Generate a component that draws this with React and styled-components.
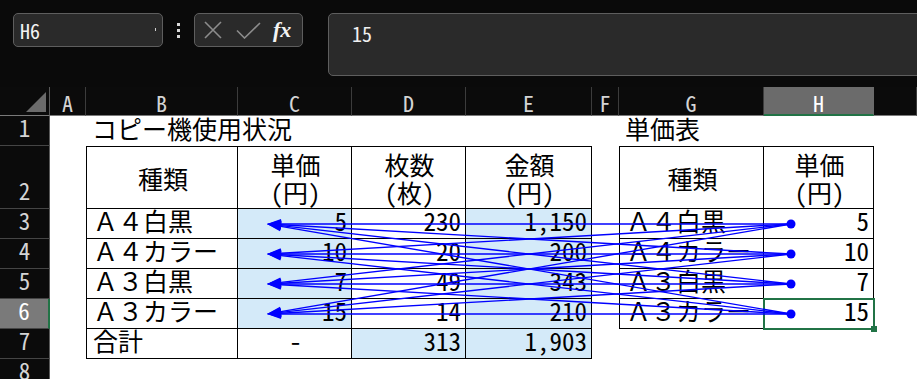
import React from "react";
import styled, { createGlobalStyle } from "styled-components";

const MONO = `"Noto Sans Mono CJK JP", "Noto Sans CJK JP", "DejaVu Sans Mono", monospace`;

const GlobalStyle = createGlobalStyle`
  html, body {
    margin: 0;
    padding: 0;
    background: #0a0a0a;
    overflow: hidden;
  }
  #root {
    width: 917px;
    height: 379px;
    overflow: hidden;
  }
`;

const Page = styled.div`
  display: flex;
  flex-direction: column;
  width: 917px;
  height: 379px;
  background: #0a0a0a;
  overflow: hidden;
`;

const FormulaBar = styled.div`
  display: flex;
  align-items: flex-start;
  height: 87px;
  flex-shrink: 0;
  box-sizing: border-box;
  padding: 13px 0 0 13px;
`;

const NameBox = styled.div`
  position: relative;
  width: 150px;
  height: 34px;
  box-sizing: border-box;
  display: flex;
  align-items: center;
  padding: 0 6px;
  border: 1px solid #5e5e5e;
  border-radius: 5px;
  background: #2a2a2a;
  color: #f2f2f2;
  font: 20px ${MONO};

  &::after {
    content: "";
    position: absolute;
    right: 6px;
    top: 14px;
    width: 1px;
    height: 3px;
    background: #cfcfcf;
  }
`;

const Grip = styled.div`
  width: 31px;
  height: 34px;
  display: flex;
  flex-direction: column;
  align-items: center;
  justify-content: center;
  gap: 3px;
`;

const GripDot = styled.span`
  width: 3px;
  height: 3px;
  background: #d9d9d9;
`;

const ActionBox = styled.div`
  width: 109px;
  height: 34px;
  box-sizing: border-box;
  display: flex;
  align-items: center;
  padding-left: 9px;
  gap: 14px;
  border: 1px solid #5e5e5e;
  border-radius: 5px;
  background: #2a2a2a;
`;

const Fx = styled.span`
  color: #f4f4f4;
  font: italic bold 22px "Liberation Serif", "DejaVu Serif", serif;
  margin-left: -2px;
`;

const FormulaInput = styled.div`
  flex: 1;
  height: 63px;
  margin-left: 25px;
  margin-right: -10px;
  box-sizing: border-box;
  padding: 5px 0 0 23px;
  border: 1px solid #5e5e5e;
  border-radius: 5px;
  background: #2a2a2a;
  color: #f0f0f0;
  font: 20px ${MONO};
`;

const Sheet = styled.div`
  position: relative;
  display: grid;
  grid-template-columns: 50px 36px 152px 114px 114px 126px 27px 145px 110px 1fr;
  grid-template-rows: 29px 30px 63px repeat(6, 30px);
  background: #ffffff;
  flex-shrink: 0;
`;

const Corner = styled.div`
  display: flex;
  align-items: flex-end;
  justify-content: flex-end;
  padding: 0 3px 3px 0;
  background: #0b0b0b;
  border-right: 1px solid #5a5a5a;
  border-bottom: 1px solid #7a7a7a;
`;

const CornerMark = styled.span`
  width: 0;
  height: 0;
  border-left: 20px solid transparent;
  border-bottom: 20px solid #6b6b6b;
`;

const ColHead = styled.div`
  display: flex;
  align-items: center;
  justify-content: center;
  padding-top: 2px;
  box-sizing: border-box;
  background: ${(p) => (p.$on ? "#6b6b6b" : "#0b0b0b")};
  color: ${(p) => (p.$on ? "#ffffff" : "#d4d4d4")};
  border-right: 1px solid ${(p) => (p.$on ? "#6b6b6b" : "#3c3c3c")};
  border-bottom: ${(p) => (p.$on ? "2px solid #217346" : "1px solid #7a7a7a")};
  font: 22px ${MONO};
`;

const RowHead = styled.div`
  display: flex;
  align-items: flex-end;
  justify-content: center;
  box-sizing: border-box;
  padding-bottom: 1px;
  line-height: 28px;
  background: ${(p) => (p.$on ? "#7a7a7a" : "#0b0b0b")};
  color: ${(p) => (p.$on ? "#ffffff" : "#d4d4d4")};
  border-right: ${(p) => (p.$on ? "2px solid #217346" : "1px solid #5a5a5a")};
  border-bottom: 1px solid #454545;
  font: 23px ${MONO};
`;

const Cell = styled.div`
  position: relative;
  display: flex;
  align-items: ${(p) => (p.$mid ? "center" : "flex-end")};
  justify-content: ${(p) =>
    p.$align === "right" ? "flex-end" : p.$align === "center" ? "center" : "flex-start"};
  box-sizing: border-box;
  min-width: 0;
  padding: 0 4px 0 6px;
  line-height: 28px;
  white-space: nowrap;
  color: #000000;
  font: 25px ${MONO};
  background: ${(p) => (p.$fill ? "#d4eaf9" : "transparent")};
  border-right: ${(p) => (p.$box ? "1px solid #000" : "none")};
  border-bottom: ${(p) => (p.$box ? "1px solid #000" : "none")};
  border-left: ${(p) => (p.$left ? "1px solid #000" : "none")};
  border-top: ${(p) => (p.$top ? "1px solid #000" : "none")};
  ${(p) =>
    p.$active &&
    `
    z-index: 1;
    outline: 2px solid #217346;
    outline-offset: -1px;
    &::after {
      content: "";
      position: absolute;
      right: -4px;
      bottom: -4px;
      width: 6px;
      height: 6px;
      background: #217346;
    }
  `}
`;

const TwoLine = styled.div`
  display: flex;
  flex-direction: column;
  align-items: center;
  line-height: 28px;
`;

const Overlay = styled.svg`
  position: absolute;
  left: 0;
  top: 0;
  width: 917px;
  height: 302px;
  pointer-events: none;
  z-index: 2;
`;

const COLS = ["A", "B", "C", "D", "E", "F", "G", "H", "I"];

const head = (lines, extra = {}) => ({ t: lines, a: "center", mid: true, box: true, top: true, ...extra });
const item = (name, c, d, e, h) => ({
  B: { t: name, box: true, left: true },
  C: { t: c, a: "right", box: true, fill: true },
  D: { t: d, a: "right", box: true },
  E: { t: e, a: "right", box: true, fill: true },
  G: { t: name, box: true, left: true },
  H: { t: h, a: "right", box: true },
});

const ROWS = [
  { n: 1, cells: { B: { t: "コピー機使用状況" }, G: { t: "単価表" } } },
  {
    n: 2,
    cells: {
      B: head("種類", { left: true }),
      C: head(["単価", "(円)"]),
      D: head(["枚数", "(枚)"]),
      E: head(["金額", "(円)"]),
      G: head("種類", { left: true }),
      H: head(["単価", "(円)"]),
    },
  },
  { n: 3, cells: item("Ａ４白黒", "5", "230", "1,150", "5") },
  { n: 4, cells: item("Ａ４カラー", "10", "20", "200", "10") },
  { n: 5, cells: item("Ａ３白黒", "7", "49", "343", "7") },
  { n: 6, cells: { ...item("Ａ３カラー", "15", "14", "210", "15"), H: { t: "15", a: "right", box: true, active: true } } },
  {
    n: 7,
    cells: {
      B: { t: "合計", box: true, left: true },
      C: { t: "-", a: "center", box: true },
      D: { t: "313", a: "right", box: true, fill: true },
      E: { t: "1,903", a: "right", box: true, fill: true },
    },
  },
  { n: 8, cells: {} },
];

const TRACE_Y = [137, 167, 197, 227];
const TIP_X = 267;
const DOT_X = 791;

function Arrows() {
  const lines = [];
  const heads = [];
  TRACE_Y.forEach((from, i) => {
    TRACE_Y.forEach((to, j) => {
      const dx = DOT_X - TIP_X;
      const dy = from - to;
      const len = Math.hypot(dx, dy);
      const ux = dx / len;
      const uy = dy / len;
      const bx = TIP_X + ux * 14;
      const by = to + uy * 14;
      lines.push(
        <line key={`l${i}${j}`} x1={DOT_X} y1={from} x2={bx} y2={by} stroke="#0000ff" strokeWidth="1.4" />
      );
      heads.push(
        <polygon
          key={`h${i}${j}`}
          points={`${TIP_X},${to} ${bx - uy * 5},${by + ux * 5} ${bx + uy * 5},${by - ux * 5}`}
          fill="#0000ff"
        />
      );
    });
  });
  return (
    <Overlay viewBox="0 0 917 302">
      {lines}
      {heads}
      {TRACE_Y.map((y) => (
        <circle key={y} cx={DOT_X} cy={y} r="4.5" fill="#0000ff" />
      ))}
    </Overlay>
  );
}

function CellText({ t }) {
  if (Array.isArray(t)) {
    return (
      <TwoLine>
        {t.map((line) => (
          <span key={line}>{line}</span>
        ))}
      </TwoLine>
    );
  }
  return t || null;
}

export default function App() {
  return (
    <>
      <GlobalStyle />
      <Page>
        <FormulaBar>
          <NameBox>H6</NameBox>
          <Grip>
            <GripDot />
            <GripDot />
            <GripDot />
          </Grip>
          <ActionBox>
            <svg width="18" height="18" viewBox="0 0 18 18">
              <path d="M1 1L17 17M17 1L1 17" stroke="#8c8c8c" strokeWidth="1.6" fill="none" />
            </svg>
            <svg width="25" height="17" viewBox="0 0 25 17">
              <path d="M1 8.5L8.5 16L24 1" stroke="#8c8c8c" strokeWidth="1.6" fill="none" />
            </svg>
            <Fx>fx</Fx>
          </ActionBox>
          <FormulaInput>15</FormulaInput>
        </FormulaBar>

        <Sheet>
          <Corner>
            <CornerMark />
          </Corner>
          {COLS.map((c) => (
            <ColHead key={c} $on={c === "H"}>
              {c === "I" ? "" : c}
            </ColHead>
          ))}
          {ROWS.map((row) => (
            <React.Fragment key={row.n}>
              <RowHead $on={row.n === 6}>{row.n}</RowHead>
              {COLS.map((c) => {
                const cell = row.cells[c] || {};
                return (
                  <Cell
                    key={c}
                    $align={cell.a}
                    $mid={cell.mid}
                    $fill={cell.fill}
                    $box={cell.box}
                    $left={cell.left}
                    $top={cell.top}
                    $active={cell.active}
                  >
                    <CellText t={cell.t} />
                  </Cell>
                );
              })}
            </React.Fragment>
          ))}
          <Arrows />
        </Sheet>
      </Page>
    </>
  );
}
